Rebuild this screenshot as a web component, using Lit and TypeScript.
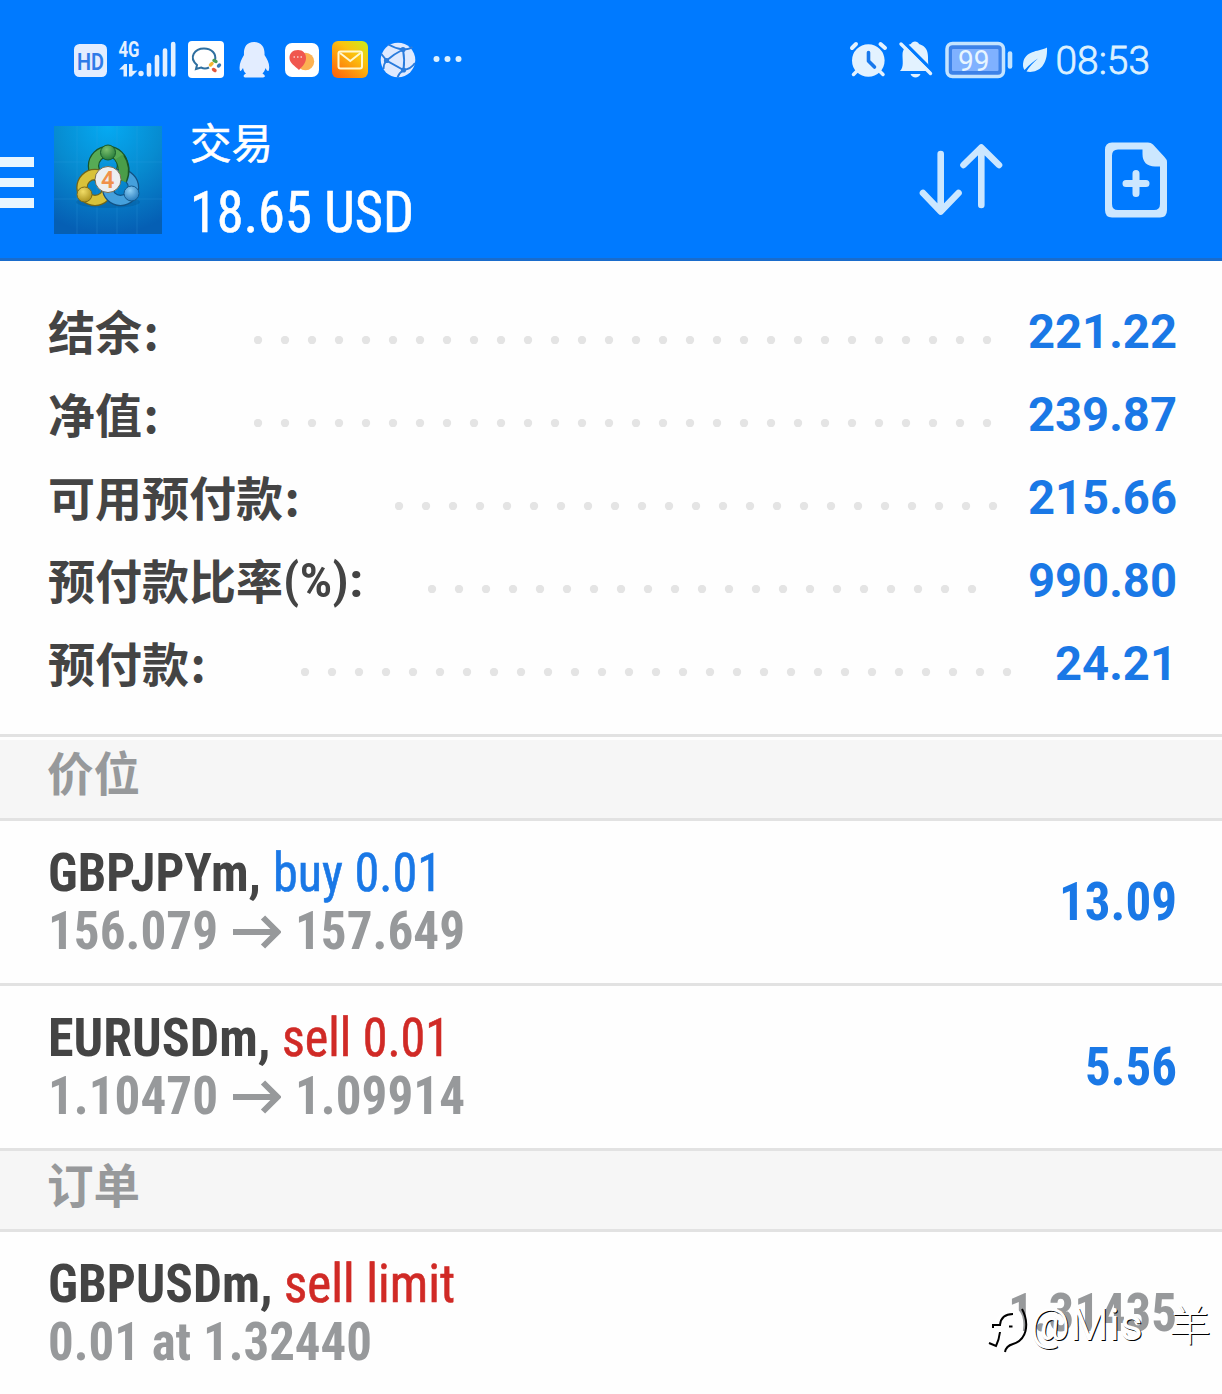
import { LitElement, html, svg, css, nothing } from 'lit';
import { customElement, property } from 'lit/decorators.js';

/**
 * One run of text, squeezed to a given advance width.
 * The baseline sits at `base` inside a box of `height`.
 */
@customElement('fit-text')
export class FitText extends LitElement {
  static styles = css`
    :host {
      display: block;
      flex: none;
    }

    svg {
      display: block;
      overflow: visible;
      font-family: 'Roboto Condensed', Roboto, 'Noto Sans CJK SC', sans-serif;
      font-stretch: 75%;
    }
  `;

  @property() text = '';
  @property() color = '#fff';
  @property({ type: Number }) size = 54;
  @property({ type: Number }) weight = 400;
  @property({ type: Number }) width = 100;
  @property({ type: Number }) height = 58;
  @property({ type: Number }) base = 46;

  render() {
    // regular weight gets a thin outline, it is too faint at these sizes
    const outline = this.weight === 400 ? 0.6 : 0;
    return html`
      <svg width=${this.width} height=${this.height}>
        <text x="0" y=${this.base} fill=${this.color} stroke=${this.color} stroke-width=${outline}
          font-size=${this.size} font-weight=${this.weight}
          textLength=${this.width} lengthAdjust="spacingAndGlyphs">${this.text}</text>
      </svg>
    `;
  }
}

@customElement('status-bar')
export class StatusBar extends LitElement {
  static styles = css`
    :host {
      display: flex;
      justify-content: space-between;
      height: 80px;
      padding: 40px 72px 0 72px;
      box-sizing: border-box;
    }

    svg {
      display: block;
      overflow: visible;
      font-family: Roboto, sans-serif;
    }
  `;

  render() {
    return html`
      <svg width="400" height="40" viewBox="72 40 400 40">
        <defs>
          <linearGradient id="mail" x1="1" y1="0" x2="0.2" y2="1">
            <stop offset="0" stop-color="#c8ee1c" />
            <stop offset="0.4" stop-color="#fbc30f" />
            <stop offset="1" stop-color="#ff6a0c" />
          </linearGradient>
        </defs>
        <rect x="74" y="44" width="33" height="33" rx="5.500" fill="#e3edff" />
        <text x="77" y="69.500" font-size="23.500" font-weight="600" fill="#2f7be8" textLength="27" lengthAdjust="spacingAndGlyphs">HD</text>
        <text x="118.500" y="57" font-size="21.500" font-weight="700" fill="#e3f0ff" textLength="21" lengthAdjust="spacingAndGlyphs">4G</text>
        <g fill="#e3f0ff">
          <path d="M119 69.500L124.500 64H127V76.500H123.500V69.500ZM129 64H132.500V71L137.500 70.500L131.500 76.500H129Z" />
          <circle cx="141" cy="73.500" r="2.700" />
        </g>
        <path d="M149 65v9.500M157 57v17.500M165 50.500v24M173.200 44v30.500" stroke="#e3f0ff" stroke-width="4.600" stroke-linecap="round" />
        <rect x="188" y="41" width="36" height="37" rx="4" fill="#fff" />
        <path d="M209 67.500C206 69 203 68.500 201 67.500L196 69L197 65C188 57 195 48.500 204 48.500C212 48.500 216.500 54 215 60" fill="none" stroke="#2f6f9f" stroke-width="2" />
        <g stroke-width="3.400" stroke-linecap="round">
          <path d="M210.500 65L212 63.500" stroke="#f2b632" />
          <path d="M214 60.500L216 61.500" stroke="#4b9c55" />
          <path d="M218.500 66L219.500 65" stroke="#3779b8" />
          <path d="M213.500 69.500L215 70.500" stroke="#e2573c" />
        </g>
        <path d="M254 42C246 42 243.500 48 244 55C241 60 238.500 65 240 71C241.500 71 242 69.500 243 68C243.500 71 245 73 246 73.500C243 75 243 77 245 77.500H263C266 77 265 75 262.500 73.500C264 72 265 70 265.500 68C266.500 70 267.500 71.500 268.500 71C270.500 66 268 60 264.500 55C265 48 262 42 254 42Z" fill="#e3edff" />
        <rect x="285" y="43" width="34" height="34" rx="7" fill="#fff" />
        <circle cx="305.500" cy="61.500" r="8.700" fill="#fcb252" />
        <path d="M298 50C292.500 50 289.500 53.500 289.500 58C289.500 63 295 66 299 70C303 66 306 62.500 306 58C306 53.500 303 50 298 50Z" fill="#f0574f" />
        <path d="M293.500 57h1.500M297 57h1.500M300.500 57h1.500" stroke="#fff" stroke-width="1.300" opacity="0.7" />
        <rect x="332" y="41" width="36" height="37" rx="6" fill="url(#mail)" />
        <rect x="338.500" y="51.500" width="23.500" height="17" rx="2" fill="none" stroke="#fff8d0" stroke-width="2" />
        <path d="M340 53L350.300 61L360.500 53" fill="none" stroke="#fff8d0" stroke-width="2" />
        <circle cx="398" cy="60" r="17.300" fill="#dfeaff" />
        <path d="M388.500 44.500Q395 48.500 403 49.500Q409 49.500 412.500 47M403 49.500Q394 54 386.500 60.500L403.500 70Q405 60 403 49.500M381 53.500L386.500 60.500Q383.500 64 383.500 69M403.500 70Q399 73 397.500 77.500M403.500 70Q411 69 415 63" fill="none" stroke="#2a7cdd" stroke-width="1.900" />
        <circle cx="403" cy="49.500" r="2.600" fill="#2a7cdd" />
        <circle cx="386.500" cy="60.500" r="2.600" fill="#2a7cdd" />
        <circle cx="403.500" cy="70" r="2.600" fill="#2a7cdd" />
        <g fill="#dcf1ff">
          <circle cx="436.500" cy="59" r="3" />
          <circle cx="447.500" cy="59" r="3" />
          <circle cx="458.500" cy="59" r="3" />
        </g>
      </svg>
      <svg width="302" height="40" viewBox="848 40 302 40">
        <circle cx="868.300" cy="60.500" r="16.300" fill="#e3f2ff" />
        <path d="M852 48L856 44M880.500 44L885 48" stroke="#e3f2ff" stroke-width="4" stroke-linecap="round" />
        <path d="M857 71L853.500 74.500M879.500 71L883 74.500" stroke="#e3f2ff" stroke-width="3.500" stroke-linecap="round" />
        <path d="M868.500 52.500V61L874.500 67" fill="none" stroke="#1878ec" stroke-width="3.600" stroke-linecap="round" stroke-linejoin="round" />
        <path d="M911 44C912 40.500 918 40.500 919 44C926 46 928 51 928 57C928 64 928.500 68 930 71H900C904 67 902.500 61 902.500 55C902.500 49 906 45 911 44ZM910.500 74H920.500C919 78.500 912 78.500 910.500 74Z" fill="#e3f2ff" />
        <path d="M901.500 40L934.500 73" stroke="#007aff" stroke-width="3.600" />
        <path d="M901 44L930.500 73.500" stroke="#e3f2ff" stroke-width="3.400" stroke-linecap="round" />
        <rect x="947" y="43.500" width="56.500" height="33" rx="5.500" fill="#3d82e8" stroke="#c4e4ff" stroke-width="3.500" />
        <rect x="952" y="49" width="46.500" height="22" rx="1" fill="#7fb1ff" />
        <path d="M1010 53.500V66.500" stroke="#c4e4ff" stroke-width="4.600" stroke-linecap="round" />
        <text x="958" y="70.700" font-size="29.500" fill="#e8f6ff" textLength="31.500" lengthAdjust="spacingAndGlyphs">99</text>
        <path d="M1047 47.500C1040 51.500 1027 50 1023.500 61C1022.500 65 1023 68 1024.500 70C1030 64 1034 61 1038 58.500C1033 63 1029 67 1026.500 71.500C1036 73.500 1048 68 1047 47.500Z" fill="#dcf1ff" />
        <text x="1055.500" y="74" font-size="39.500" fill="#dcf1ff" textLength="94.500" lengthAdjust="spacingAndGlyphs" font-weight="300" stroke="#dcf1ff" stroke-width="0.800">08:53</text>
      </svg>
    `;
  }
}

@customElement('app-header')
export class AppHeader extends LitElement {
  static styles = css`
    :host {
      display: flex;
      align-items: flex-start;
      height: 181px;
      padding-top: 40px;
      box-sizing: border-box;
      border-bottom: 3px solid #1a6ccc;
    }

    svg {
      display: block;
      flex: none;
    }

    .menu {
      width: 34px;
      display: grid;
      gap: 11px;
      margin: 37px 20px 0 0;
    }

    .menu i {
      height: 9.5px;
      background: #e8f6ff;
    }

    .logo {
      margin-top: 6px;
    }

    .titles {
      margin-left: 28px;
      flex: 1;
    }

    .sort {
      margin: 22px 101px 0 0;
    }

    .add {
      margin: 22px 55px 0 0;
    }
  `;

  render() {
    return html`
      <div class="menu"><i></i><i></i><i></i></div>
      <svg class="logo" width="108" height="108" viewBox="0 0 108 108">
        <defs>
          <radialGradient id="sky" cx="0.5" cy="0" r="1">
            <stop offset="0" stop-color="#05aaf3" />
            <stop offset="0.5" stop-color="#078bd0" />
            <stop offset="1" stop-color="#055fb4" />
          </radialGradient>
          <radialGradient id="green" cx="0.4" cy="0.3" r="0.8">
            <stop offset="0" stop-color="#7cc06e" />
            <stop offset="1" stop-color="#1d7434" />
          </radialGradient>
          <radialGradient id="gold" cx="0.4" cy="0.3" r="0.8">
            <stop offset="0" stop-color="#f1dc66" />
            <stop offset="1" stop-color="#a58a14" />
          </radialGradient>
          <radialGradient id="blue" cx="0.4" cy="0.3" r="0.8">
            <stop offset="0" stop-color="#8fd0f5" />
            <stop offset="1" stop-color="#1c73b8" />
          </radialGradient>
        </defs>
        <rect width="108" height="108" fill="url(#sky)" />
        <path d="M0 36H108M0 73H108M23 0V108M43 0V108M63 0V108M83 0V108" stroke="#3fa8e8" stroke-width="0.700" opacity="0.3" />
        <ellipse cx="54" cy="76" rx="32" ry="6" fill="#034f8c" opacity="0.3" />
        <g fill="none">
          <circle cx="54" cy="40" r="14.500" stroke="#17552a" stroke-width="11.500" />
          <circle cx="54" cy="40" r="14.500" stroke="#57ab55" stroke-width="9" />
          <circle cx="41" cy="61.500" r="13" stroke="#6f641a" stroke-width="11.500" />
          <circle cx="41" cy="61.500" r="13" stroke="#d8c23a" stroke-width="9" />
          <circle cx="66.500" cy="61.500" r="13" stroke="#125284" stroke-width="11.500" />
          <circle cx="66.500" cy="61.500" r="13" stroke="#45a0dc" stroke-width="9" />
          <path d="M66 32Q73 42 68 54" stroke="#17552a" stroke-width="11" />
          <path d="M65 31Q72.500 42 67.500 54.500" stroke="#4a9d49" stroke-width="9" />
        </g>
        <circle cx="54" cy="26.500" r="7.500" fill="url(#green)" stroke="#175c2d" />
        <circle cx="30.500" cy="68.500" r="7.500" fill="url(#gold)" stroke="#7b6a18" />
        <circle cx="77.500" cy="67.500" r="7.500" fill="url(#blue)" stroke="#15598c" />
        <circle cx="54" cy="53.500" r="13" fill="#eceef0" stroke="#786d52" />
        <text x="47" y="62" font-family="Roboto, sans-serif" font-size="23.500" font-weight="600" fill="#f0914a">4</text>
      </svg>
      <div class="titles">
        <fit-text text="交易" size="41.5" width="83" height="50" base="39"></fit-text>
        <fit-text text="18.65 USD" size="56.5" width="224" height="60" base="62"></fit-text>
      </div>
      <svg class="sort" width="84" height="74" viewBox="919 142 84 74">
        <path d="M940.700 154V211M923 193L940.700 211.500L958.500 193M981.300 205V148M963.500 165L981.300 147.500L999 165" fill="none" stroke="#cce7ff" stroke-width="6.600" stroke-linecap="round" stroke-linejoin="round" />
      </svg>
      <svg class="add" width="63" height="76" viewBox="1104 142 63 76">
        <path fill="#cce7ff" fill-rule="evenodd" d="M1112 142.500H1148Q1151 142.500 1153 144.500L1164.500 157Q1167 159.500 1167 162V210Q1167 217.500 1160 217.500H1112Q1105 217.500 1105 210V150Q1105 142.500 1112 142.500ZM1118 149.500Q1112 149.500 1112 155.500V204Q1112 210 1118 210H1154Q1160 210 1160 204V166.500H1155Q1142.500 166 1142.500 154V149.500Z" />
        <path d="M1126 183.500H1146M1136 173.500V193.500" stroke="#cce7ff" stroke-width="7" stroke-linecap="round" />
      </svg>
    `;
  }
}

interface Summary {
  label: string;
  unit?: boolean;
  value: string;
  labelWidth: number;
  dots: number;
}

@customElement('account-summary')
export class AccountSummary extends LitElement {
  static styles = css`
    :host {
      display: block;
      height: 473px;
      padding: 30px 45px 0 48px;
      box-sizing: border-box;
      font-family: Roboto, 'Noto Sans CJK SC', sans-serif;
      font-weight: 700;
      font-size: 47px;
      line-height: 83px;
    }

    .row {
      display: flex;
      align-items: flex-start;
      height: 83px;
    }

    .label {
      display: flex;
      flex: none;
      color: #444;
      white-space: nowrap;
    }

    .name,
    .colon {
      font-family: 'Noto Sans CJK SC', sans-serif;
      line-height: 78px;
      height: 83px;
    }

    .colon {
      margin-left: 1.5px;
    }

    .dots {
      margin-top: 45px;
      flex: none;
      display: block;
    }

    .value {
      margin-left: auto;
      font-size: 47.2px;
      color: #1a78e6;
    }
  `;

  rows: Summary[] = [
    { label: '结余', value: '221.22', labelWidth: 205.5, dots: 28 },
    { label: '净值', value: '239.87', labelWidth: 205.5, dots: 28 },
    { label: '可用预付款', value: '215.66', labelWidth: 347, dots: 23 },
    { label: '预付款比率', unit: true, value: '990.80', labelWidth: 380, dots: 21 },
    { label: '预付款', value: '24.21', labelWidth: 253, dots: 27 },
  ];

  render() {
    return this.rows.map((r) => html`
      <div class="row">
        <div class="label" style="width:${r.labelWidth}px">
          <span class="name">${r.label}</span>
          ${r.unit ? html`
            <fit-text text="(%)" color="#444" size="48" weight="600" width="66" height="83" base="56.5"></fit-text>
            <fit-text text=":" color="#444" size="48" weight="700" width="14" height="83" base="56.5"></fit-text>
          ` : html`<span class="colon">:</span>`}
        </div>
        <svg class="dots" width=${r.dots * 27} height="8">
          ${Array.from({ length: r.dots }, (_, i) => svg`<circle cx=${4 + i * 27} cy="4" r="4.200" fill="#e4e4e4" />`)}
        </svg>
        <span class="value">${r.value}</span>
      </div>
    `);
  }
}

@customElement('section-title')
export class SectionTitle extends LitElement {
  static styles = css`
    :host {
      display: block;
      box-sizing: border-box;
      padding-left: 47px;
      border-top: 3px solid #e2e2e2;
      border-bottom: 3px solid #e2e2e2;
      background: #f6f6f6;
      color: #97999b;
      font: 700 46.5px/68px 'Noto Sans CJK SC', sans-serif;
    }
  `;

  render() {
    return html`<slot></slot>`;
  }
}

// each run is [text, advance width]
type Run = [string, number];

@customElement('trade-row')
export class TradeRow extends LitElement {
  static styles = css`
    :host {
      display: flex;
      justify-content: space-between;
      height: 162px;
      padding: 24px 45px 0 47.5px;
      box-sizing: border-box;
    }

    .line {
      display: flex;
      height: 58px;
    }

    .arrow {
      display: block;
      margin: 12px 14px 0 15px;
    }

    .side {
      margin-left: 12px;
    }

    .value {
      margin-top: 29px;
    }
  `;

  @property({ attribute: false }) symbol: Run = ['', 0];
  @property({ attribute: false }) side: Run = ['', 0];
  @property({ attribute: false }) from: Run = ['', 0];
  @property({ attribute: false }) to?: Run;
  @property({ attribute: false }) value: Run = ['', 0];
  @property() color = '#1a78e6';
  @property() valueColor = '#1a78e6';

  render() {
    return html`
      <div>
        <div class="line">
          <fit-text text=${this.symbol[0]} width=${this.symbol[1]} color="#444" weight="700"></fit-text>
          <fit-text class="side" text=${this.side[0]} width=${this.side[1]} color=${this.color}></fit-text>
        </div>
        <div class="line">
          <fit-text text=${this.from[0]} width=${this.from[1]} color="#97999b" weight="700"></fit-text>
          ${this.to ? html`
            <svg class="arrow" width="48" height="34" viewBox="0 0 48 34">
              <path d="M0 17H43M30 2.500L44.500 17L30 31.500" fill="none" stroke="#97999b" stroke-width="6" />
            </svg>
            <fit-text text=${this.to[0]} width=${this.to[1]} color="#97999b" weight="700"></fit-text>
          ` : nothing}
        </div>
      </div>
      <fit-text class="value" text=${this.value[0]} width=${this.value[1]} color=${this.valueColor} weight="700"></fit-text>
    `;
  }
}

@customElement('app-root')
export class AppRoot extends LitElement {
  static styles = css`
    :host {
      display: block;
      position: relative;
      width: 1222px;
      height: 1394px;
      overflow: hidden;
      background: #fefefe;
    }

    .top {
      background: #007aff;
    }

    .positions {
      height: 87px;
      box-shadow: inset 0 3px 0 #fefefe;
    }

    .orders {
      height: 84px;
      line-height: 63px;
    }

    .first {
      border-bottom: 3px solid #e2e2e2;
      height: 165px;
    }

    .watermark {
      position: absolute;
      left: 988px;
      top: 1300px;
      display: flex;
      color: #fff;
      font: 400 44px/50px Roboto, sans-serif;
      text-shadow: 1px 1px 0 #000;
      white-space: nowrap;
    }

    .watermark svg {
      overflow: visible;
      margin-right: 4px;
    }

    .user {
      width: 139px;
      letter-spacing: 0.5px;
    }

    .cjk {
      font: 300 42px/46px 'Noto Sans CJK SC', sans-serif;
    }
  `;

  render() {
    return html`
      <div class="top">
        <status-bar></status-bar>
        <app-header></app-header>
      </div>
      <account-summary></account-summary>
      <section-title class="positions">价位</section-title>
      <trade-row class="first" .symbol=${['GBPJPYm,', 213]} .side=${['buy 0.01', 169]}
        .from=${['156.079', 170]} .to=${['157.649', 170]} .value=${['13.09', 118]}></trade-row>
      <trade-row .symbol=${['EURUSDm,', 222.5]} .side=${['sell 0.01', 168]} color="#d02a26"
        .from=${['1.10470', 170]} .to=${['1.09914', 170]} .value=${['5.56', 92]}></trade-row>
      <section-title class="orders">订单</section-title>
      <trade-row .symbol=${['GBPUSDm,', 224.5]} .side=${['sell limit', 171]} color="#d02a26"
        .from=${['0.01 at 1.32440', 324]} .value=${['1.31435', 169]} valueColor="#97999b"></trade-row>
      <div class="watermark">
        <svg width="38" height="50" viewBox="0 0 38 50">
          <path d="M7 23Q11 10 24 9Q33 7 35 20Q37 36 28 42Q20 44 16 50Q14 44 9 42L4 43Q5 35 8 28Z" fill="#fff" />
          <path d="M5 28V25H12Q13 14 25 14M12 32Q11 40 8 46L1 43M21 26.500H24.500M34 9Q40 20 37.500 31Q35 41 25 44Q18 46 17 52" fill="none" stroke="#000" stroke-width="2" />
        </svg>
        <span class="user">@Mis</span>
        <span class="cjk">羊</span>
      </div>
    `;
  }
}
